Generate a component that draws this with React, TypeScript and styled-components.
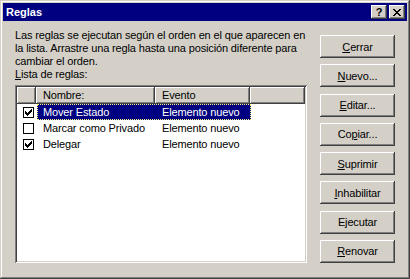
import styled, { createGlobalStyle, css } from 'styled-components';

const GlobalStyle = createGlobalStyle`
    html, body {
        margin: 0;
        padding: 0;
        background: #d4d0c8;
    }
    * {
        box-sizing: border-box;
    }
`;

const FONT = `"Liberation Sans", Arial, sans-serif`;

const raised = css`
    background: #d4d0c8;
    box-shadow:
        inset -1px -1px #404040,
        inset 1px 1px #ffffff,
        inset -2px -2px #808080,
        inset 2px 2px #d4d0c8;
`;

interface Irule {
    name: string;
    event: string;
    checked: boolean;
}

const rules: Irule[] = [
    { name: 'Mover Estado', event: 'Elemento nuevo', checked: true },
    { name: 'Marcar como Privado', event: 'Elemento nuevo', checked: false },
    { name: 'Delegar', event: 'Elemento nuevo', checked: true },
];

// índice de la letra subrayada (-1 = ninguna)
const actions = [
    { label: 'Cerrar', key: 0 },
    { label: 'Nuevo...', key: 0 },
    { label: 'Editar...', key: 0 },
    { label: 'Copiar...', key: 2 },
    { label: 'Suprimir', key: 0 },
    { label: 'Inhabilitar', key: 0 },
    { label: 'Ejecutar', key: -1 },
    { label: 'Renovar', key: 0 },
];

const Mnemonic = ({ text, index }: { text: string; index: number }) => {
    if (index < 0) return <>{text}</>;
    return (
        <>
            {text.slice(0, index)}
            <Key>{text[index]}</Key>
            {text.slice(index + 1)}
        </>
    );
};

const CheckMark = () => (
    <svg width="7" height="7" viewBox="0 0 7 7" shapeRendering="crispEdges">
        <path
            d="M0 2h1v3H0z M1 3h1v3H1z M2 4h1v3H2z M3 3h1v3H3z M4 2h1v3H4z M5 1h1v3H5z M6 0h1v3H6z"
            fill="#000"
        />
    </svg>
);

const CloseGlyph = () => (
    <svg width="8" height="7" viewBox="0 0 8 7" shapeRendering="crispEdges">
        <path
            d="M0 0h2v1H0z M6 0h2v1H6z M1 1h2v1H1z M5 1h2v1H5z M2 2h4v1H2z M3 3h2v1H3z M2 4h4v1H2z M1 5h2v1H1z M5 5h2v1H5z M0 6h2v1H0z M6 6h2v1H6z"
            fill="#000"
        />
    </svg>
);

export default function App() {
    return (
        <>
            <GlobalStyle />
            <Window>
                <TitleBar>
                    <TitleText>Reglas</TitleText>
                    <CaptionButtons>
                        <CaptionButton>?</CaptionButton>
                        <CaptionButton>
                            <CloseGlyph />
                        </CaptionButton>
                    </CaptionButtons>
                </TitleBar>
                <Body>
                    <LeftColumn>
                        <Description>
                            Las reglas se ejecutan según el orden en el que aparecen en
                            <br />
                            la lista. Arrastre una regla hasta una posición diferente para
                            <br />
                            cambiar el orden.
                        </Description>
                        <ListLabel>
                            <Mnemonic text="Lista de reglas:" index={0} />
                        </ListLabel>
                        <ListBox>
                            <Header>
                                <HeaderCell $width={19} />
                                <HeaderCell $width={119}>Nombre:</HeaderCell>
                                <HeaderCell $width={95}>Evento</HeaderCell>
                                <HeaderCell $grow />
                            </Header>
                            {rules.map((rule, i) => (
                                <Row key={rule.name}>
                                    <CheckCell>
                                        <CheckBox>{rule.checked && <CheckMark />}</CheckBox>
                                    </CheckCell>
                                    <RowLabel $selected={i === 0}>
                                        <NameCell>{rule.name}</NameCell>
                                        <EventCell>{rule.event}</EventCell>
                                    </RowLabel>
                                </Row>
                            ))}
                        </ListBox>
                    </LeftColumn>
                    <ButtonColumn>
                        {actions.map(a => (
                            <PushButton key={a.label}>
                                <Mnemonic text={a.label} index={a.key} />
                            </PushButton>
                        ))}
                    </ButtonColumn>
                </Body>
            </Window>
        </>
    );
}

const Window = styled.div`
    width: 410px;
    height: 279px;
    padding: 3px;
    display: flex;
    flex-direction: column;
    background: #d4d0c8;
    box-shadow:
        inset -1px -1px #404040,
        inset 1px 1px #d4d0c8,
        inset -2px -2px #808080,
        inset 2px 2px #ffffff;
    font-family: ${FONT};
    font-size: 11px;
    letter-spacing: -0.14px;
    color: #000;
`;

const TitleBar = styled.div`
    height: 18px;
    padding: 0 2px;
    display: flex;
    align-items: center;
    background: #000080;
`;

const TitleText = styled.div`
    flex: 1;
    padding-left: 1px;
    color: #fff;
    font-weight: 700;
    font-size: 11px;
    letter-spacing: 0;
`;

const CaptionButtons = styled.div`
    display: flex;
    gap: 2px;
`;

const CaptionButton = styled.div`
    ${raised};
    width: 16px;
    height: 14px;
    display: flex;
    align-items: center;
    justify-content: center;
    font-weight: 700;
    font-size: 11px;
    line-height: 14px;
    color: #000;
`;

const Body = styled.div`
    flex: 1;
    display: flex;
    gap: 13px;
    padding: 8px 12px 13px;
`;

const LeftColumn = styled.div`
    width: 292px;
    display: flex;
    flex-direction: column;
`;

const Description = styled.p`
    margin: 0;
    line-height: 13px;
    white-space: nowrap;
`;

const ListLabel = styled.div`
    line-height: 13px;
    margin-bottom: 4px;
`;

const Key = styled.span`
    text-decoration: underline;
`;

const ListBox = styled.div`
    flex: 1;
    padding: 2px;
    background: #fff;
    box-shadow:
        inset 1px 1px #808080,
        inset -1px -1px #ffffff,
        inset 2px 2px #404040,
        inset -2px -2px #d4d0c8;
`;

const Header = styled.div`
    height: 17px;
    display: flex;
`;

const HeaderCell = styled.div<{ $width?: number; $grow?: boolean }>`
    ${raised};
    box-shadow:
        inset -1px -1px #404040,
        inset 1px 1px #ffffff,
        inset -2px -2px #808080;
    width: ${p => (p.$width ? `${p.$width}px` : 'auto')};
    flex: ${p => (p.$grow ? 1 : 'none')};
    padding-left: 7px;
    line-height: 17px;
    white-space: nowrap;
`;

const Row = styled.div`
    height: 16px;
    display: flex;
`;

const CheckCell = styled.div`
    width: 20px;
    padding-left: 6px;
    display: flex;
    align-items: center;
`;

const CheckBox = styled.div`
    width: 11px;
    height: 11px;
    border: 1px solid #000;
    background: #fff;
    display: flex;
    align-items: center;
    justify-content: center;
`;

const RowLabel = styled.div<{ $selected: boolean }>`
    width: 214px;
    display: flex;
    border: 1px dotted transparent;
    line-height: 15px;
    white-space: nowrap;
    ${p =>
        p.$selected &&
        css`
            background: #000080;
            color: #fff;
            border-color: #ffff7f;
        `}
`;

const NameCell = styled.div`
    width: 117px;
    padding-left: 5px;
`;

const EventCell = styled.div`
    padding-left: 7px;
`;

const ButtonColumn = styled.div`
    width: 75px;
    margin-top: 6px;
    display: flex;
    flex-direction: column;
    justify-content: space-between;
`;

const PushButton = styled.button`
    ${raised};
    width: 75px;
    height: 23px;
    padding: 0;
    border: none;
    font-family: ${FONT};
    font-size: 11px;
    font-weight: 400;
    letter-spacing: -0.14px;
    color: #000;
`;
